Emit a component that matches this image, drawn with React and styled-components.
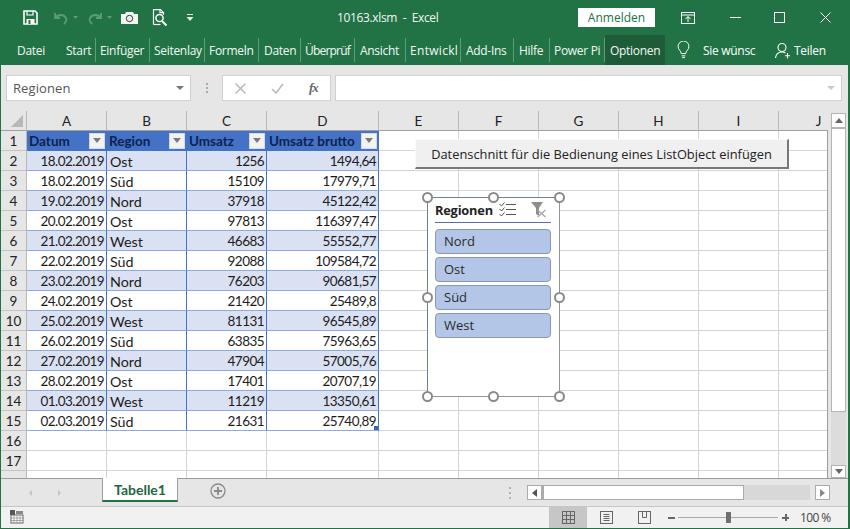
import React from "react";
import styled, { createGlobalStyle } from "styled-components";

const Global = createGlobalStyle`
  html, body { margin: 0; padding: 0; background: #fff; }
  * { box-sizing: border-box; }
`;
const ui = `"Open Sans", "Noto Sans", sans-serif`;
const cellFont = `Lato, "Liberation Sans", sans-serif`;
const GREEN = "#217346";

const Win = styled.div`
  width: 850px; height: 529px; display: flex; flex-direction: column; overflow: hidden;
  border-left: 1px solid ${GREEN}; border-right: 2px solid ${GREEN}; border-bottom: 1px solid ${GREEN};
  background: #e6e6e6; font-family: ${ui};
`;
const TitleBar = styled.div`
  height: 35px; flex: none; background: ${GREEN}; color: #fff; display: flex; align-items: center; position: relative;
`;
const QatIcon = styled.svg`
  flex: none; margin-left: ${p => p.$ml}px; display: block;
`;
const RibbonIcon = styled(QatIcon)`
  align-self: center;
`;
const Title = styled.div`
  width: 102px; margin-left: ${p => p.$ml}px; font-size: 12px; white-space: pre; color: #f2f7f4; letter-spacing: -0.35px;
`;
const SignIn = styled.div`
  margin-left: 139px; width: 77px; height: 19px; background: #fff; color: ${GREEN}; font-size: 12px;
  display: flex; align-items: center; justify-content: center; margin-top: -1px;
`;
const Ribbon = styled.div`
  height: 30px; flex: none; background: ${GREEN}; color: #fff; display: flex; align-items: stretch; font-size: 12px;
`;
const Tab = styled.div`
  width: ${p => p.$w}px; flex: none; overflow: hidden; white-space: nowrap; display: flex; align-items: center;
  padding-left: ${p => p.$pl ?? 4}px; letter-spacing: ${p => p.$ls ?? -0.3}px; color: #f4f8f6; position: relative;
  background: ${p => p.$active ? "#1e5c39" : "transparent"};
  ${p => p.$sep ? `&::after { content: ""; position: absolute; right: 0; top: 3px; bottom: 3px; width: 1px; background: #5f9c7c; }` : ""}
`;
const Help = styled.div`
  margin-left: ${p => p.$ml}px; width: ${p => p.$w}px; white-space: nowrap; display: flex; align-items: center; letter-spacing: -0.3px;
`;
const FormulaBar = styled.div`
  height: 46px; flex: none; background: #e6e6e6; display: flex; align-items: flex-start; padding: 10px 6px 0 5px;
`;
const NameBox = styled.div`
  width: 185px; height: 26px; background: #fff; border: 1px solid #d0d0d0; display: flex; align-items: center; justify-content: space-between;
  padding: 0 6px 0 6px; font-size: 13px; color: #555; letter-spacing: 0.1px;
`;
const Caret = styled.span`
  width: 0; height: 0; border-left: 4px solid transparent; border-right: 4px solid transparent; border-top: 4px solid ${p => p.$c || "#777"}; flex: none;
`;
const Grip = styled.div`
  width: 31px; height: 26px; flex: none; display: flex; flex-direction: column; align-items: center; justify-content: center; gap: 2px;
  i { width: 2px; height: 2px; background: #aaa; display: block; }
`;
const FxBox = styled.div`
  width: 109px; height: 26px; background: #fff; border: 1px solid #d0d0d0; display: flex; align-items: center; flex: none; padding-left: 12px; gap: 25px;
`;
const Fx = styled.span`
  font-family: "Liberation Serif", serif; font-style: italic; font-size: 13px; color: #666; font-weight: 700; letter-spacing: -1px;
`;
const Input = styled.div`
  margin-left: 4px; flex: 1; height: 26px; background: #fff; border: 1px solid #d0d0d0; display: flex; align-items: center; justify-content: flex-end; padding-right: 6px;
`;
const SheetArea = styled.div`
  height: 368px; flex: none; display: flex; background: #e6e6e6; border-bottom: 1px solid #9c9c9c;
`;
const GridWrap = styled.div`
  width: 827px; flex: none; height: 100%; overflow: hidden; position: relative;
  &::after { content: ""; position: absolute; right: 0; top: 19px; bottom: 0; width: 1px; background: #9c9c9c; }
`;
const Rows = styled.div`
  display: grid; grid-template-columns: 26px 80px 80px 80px 112px 80px 80px 80px 80px 80px 80px; grid-auto-rows: 20px;
`;
const Corner = styled.div`
  background: #e6e6e6; border-right: 1px solid #b9b9b9; border-bottom: 1px solid #a0a0a0; position: relative;
  &::after { content: ""; position: absolute; right: 3px; bottom: 3px; border-style: solid; border-width: 0 0 12px 12px; border-color: transparent transparent #b8b8b8 transparent; }
`;
const ColHead = styled.div`
  background: #e6e6e6; border-right: 1px solid #b9b9b9; border-bottom: 1px solid #a0a0a0; font-family: ${cellFont}; font-size: 13.5px; color: #222;
  display: flex; align-items: center; justify-content: center; padding-top: 1px;
`;
const RowHead = styled.div`
  background: #e6e6e6; border-right: 1px solid #b9b9b9; border-bottom: 1px solid #c4c4c4; font-family: ${cellFont}; font-size: 13.5px; color: #222;
  display: flex; align-items: center; justify-content: center; padding-top: 1px;
`;
const Cell = styled.div`
  background: #fff; border-right: 1px solid #d4d4d4; border-bottom: 1px solid #d4d4d4;
`;
const TCell = styled.div`
  background: ${p => p.$band ? "#d9e1f2" : "#fff"};
  border-right: 1px solid #4472c4; border-bottom: 1px solid #8ea9db;
  font-family: ${cellFont}; color: #1c1c1c; white-space: nowrap; overflow: hidden; position: relative;
  font-size: ${p => p.$num ? "13.5px" : "14.3px"}; letter-spacing: ${p => p.$num ? "-0.55px" : "0"};
  display: flex; align-items: center; padding: 1px 2px 0 3px;
  justify-content: ${p => p.$num ? "flex-end" : "flex-start"};
`;
const HCell = styled.div`
  background: #4472c4; border-right: 1px solid #4472c4; border-bottom: 1px solid #4472c4; font-family: ${cellFont}; font-weight: 700; font-size: 13.5px;
  color: #0e1f50; display: flex; align-items: center; justify-content: space-between; padding: 0 1px 0 2px; white-space: nowrap; overflow: hidden;
`;
const Filter = styled.span`
  width: 16px; height: 16px; background: #f3f3f3; border: 1px solid #d5d9e5; display: flex; align-items: center; justify-content: center; flex: none;
`;
const Resize = styled.span`
  position: absolute; right: 0; bottom: 0; width: 4px; height: 4px; background: #3d64ad;
`;
const MacroButton = styled.div`
  position: absolute; left: 414px; top: 28px; width: 374px; height: 30px; background: #f0f0f0;
  border-right: 2px solid #777; border-bottom: 2px solid #777; border-top: 1px solid #fafafa; border-left: 1px solid #fafafa;
  display: flex; align-items: center; justify-content: center; font-size: 12.85px; color: #222;
`;
const Slicer = styled.div`
  position: absolute; left: 426px; top: 86px; width: 133px; height: 200px; background: #fff; padding: 0 8px 0 7px;
  border: 1px solid #949494; border-left-color: #6d7fa3; border-top-color: #6d7fa3;
`;
const SlicerHead = styled.div`
  height: 25px; padding-bottom: 1px; border-bottom: 1px solid #5b6f9a; display: flex; align-items: center; font-family: ${ui}; font-weight: 700; font-size: 12.8px; color: #222; letter-spacing: -0.2px;
`;
const SlicerIcon = styled.svg`
  flex: none; margin-left: ${p => p.$ml}px; display: block;
`;
const SlicerList = styled.div`
  display: flex; flex-direction: column; gap: 3px; margin-top: 6px;
`;
const SlicerItem = styled.div`
  height: 25px; background: #b4c6e7; border: 1px solid #8898b8; border-radius: 4px; display: flex; align-items: center; padding: 0 0 1px 8px;
  font-family: ${ui}; font-size: 13px; color: #2a2a2a;
`;
const Handle = styled.span`
  position: absolute; width: 11px; height: 11px; border-radius: 50%; background: #fff; border: 2px solid #8a8a8a;
  left: ${p => p.$x}px; top: ${p => p.$y}px;
`;
const VScroll = styled.div`
  width: 20px; flex: none; display: flex; flex-direction: column; padding: 2px 2px 0 3px;
`;
const VBtn = styled.div`
  width: 15px; height: ${p => p.$h}px; background: #fff; border: 1px solid #b4b4b4; display: flex; align-items: center; justify-content: center; flex: none;
`;
const VThumb = styled.div`
  width: 15px; height: 284px; background: #fff; border: 1px solid #b4b4b4; flex: none;
`;
const VGap = styled.div`
  flex: 1; background: #dcdcdc; width: 15px;
`;
const SheetTabs = styled.div`
  height: 28px; flex: none; background: #e6e6e6; border-bottom: 1px solid #c6c6c6; display: flex; align-items: flex-start; position: relative;
`;
const Arrow = styled.span`
  margin-left: ${p => p.$ml}px; margin-top: 11px; width: 0; height: 0; border-top: 3px solid transparent; border-bottom: 3px solid transparent;
  ${p => p.$left ? "border-right: 3px solid #c4c4c4;" : "border-left: 3px solid #c4c4c4;"} flex: none;
`;
const SheetTab = styled.div`
  margin-left: 41px; margin-top: -1px; width: 76px; height: 24px; background: #fff; border-bottom: 2px solid #217346; border-left: 1px solid #9c9c9c; border-right: 1px solid #9c9c9c;
  color: #22663f; font-family: ${cellFont}; font-weight: 700; font-size: 14px; display: flex; align-items: center; justify-content: center; flex: none;
`;
const AddSheet = styled.svg`
  margin-left: 32px; margin-top: 4px; flex: none; display: block;
`;
const HDots = styled.div`
  margin-left: 283px; margin-top: 8px; flex: none; display: flex; flex-direction: column; gap: 3px;
  i { width: 2px; height: 2px; background: #b0b0b0; display: block; }
`;
const HScroll = styled.div`
  margin-left: 16px; margin-top: 6px; width: 303px; height: 15px; display: flex; flex: none;
`;
const HBtn = styled.div`
  width: 15px; height: 15px; background: #fff; border: 1px solid #ababab; display: flex; align-items: center; justify-content: center; flex: none;
`;
const HThumb = styled.div`
  width: 202px; height: 15px; background: #fff; border: 1px solid #ababab; border-left: 2px solid #ababab; flex: none;
`;
const HTrack = styled.div`
  width: 66px; height: 15px; background: #d8d8d8; margin-right: 5px; flex: none;
`;
const Status = styled.div`
  flex: 1; background: #f1f1f1; display: flex; align-items: stretch; position: relative; color: #444;
`;
const MacroIcon = styled.svg`
  margin-left: 9px; margin-top: 3px; display: block; flex: none;
`;
const ViewBtn = styled.div`
  width: 38px; flex: none; margin-left: ${p => p.$ml || 0}px; display: flex; align-items: center; justify-content: center; background: ${p => p.$on ? "#c6c6c6" : "transparent"};
`;
const Zoomer = styled.div`
  display: flex; align-items: center; margin-left: 5px; flex: none;
`;
const ZoomMark = styled.span`
  width: ${p => p.$w}px; height: 7px; position: relative; flex: none; display: block;
  &::before { content: ""; position: absolute; left: 0; right: 0; top: 2.5px; height: 2px; background: #666; }
  ${p => p.$plus ? `&::after { content: ""; position: absolute; left: 2.5px; width: 2px; top: 0; bottom: 0; background: #666; }` : ""}
`;
const ZoomTrack = styled.div`
  width: 100px; height: 1px; background: #a8a8a8; margin: 0 4px 0 3px; position: relative;
`;
const ZoomThumb = styled.span`
  position: absolute; left: 48px; top: -5px; width: 5px; height: 11px; background: #6f6f6f;
`;
const ZoomText = styled.div`
  margin-left: 11px; font-size: 12px; color: #444; align-self: center; letter-spacing: -0.6px;
`;

const data = [
  ["18.02.2019","Ost","1256","1494,64"],["18.02.2019","Süd","15109","17979,71"],["19.02.2019","Nord","37918","45122,42"],
  ["20.02.2019","Ost","97813","116397,47"],["21.02.2019","West","46683","55552,77"],["22.02.2019","Süd","92088","109584,72"],
  ["23.02.2019","Nord","76203","90681,57"],["24.02.2019","Ost","21420","25489,8"],["25.02.2019","West","81131","96545,89"],
  ["26.02.2019","Süd","63835","75963,65"],["27.02.2019","Nord","47904","57005,76"],["28.02.2019","Ost","17401","20707,19"],
  ["01.03.2019","West","11219","13350,61"],["02.03.2019","Süd","21631","25740,89"],
];
const cols = ["A","B","C","D","E","F","G","H","I","J"];
const heads = ["Datum","Region","Umsatz","Umsatz brutto"];
const tabs = [["Datei",65,16,false],["Start",30,0,true],["Einfüger",54,4,true],["Seitenlay",55,4,true],["Formeln",54,4,true],["Daten",42,5,true],["Überprüf",54,4,true,-0.8],["Ansicht",51,5,true],["Entwickl",55,4,true,0.3],["Add-Ins",53,5,true],["Hilfe",36,5,true],["Power Pi",55,4,true]];
const empties = Array.from({ length: 6 });

const Tri = ({ c = "#777", d = "down", s = 8 }) => {
  const pts = { down: "0,1 8,1 4,6", up: "0,6 8,6 4,1", left: "6,0 6,8 1,4", right: "1,0 1,8 6,4" }[d];
  return <svg width={s} height={s} viewBox="0 0 8 8"><polygon points={pts} fill={c} /></svg>;
};

export default function App() {
  return (
    <Win>
      <Global />
      <TitleBar>
        <QatIcon $ml={22} width="15" height="15" viewBox="0 0 15 15" fill="none" stroke="#fff" strokeWidth="1.6">
          <path d="M1 1h11l2 2v11H1z" /><path d="M4 1v4h6V1" strokeWidth="1.2" /><rect x="3.5" y="9" width="8" height="5" fill="#fff" stroke="none" /><rect x="5.5" y="10" width="2" height="4" fill={GREEN} stroke="none" />
        </QatIcon>
        <QatIcon $ml={15} width="28" height="14" viewBox="0 0 28 14" fill="none" stroke="#5d9a7b" strokeWidth="1.8">
          <path d="M2 2v5h5" /><path d="M2 7c3-4 9-4 11 0 1 2 0 4-2 6" /><path d="M20 5h5l-2.500 3z" fill="#5d9a7b" stroke="none" />
        </QatIcon>
        <QatIcon $ml={6} width="28" height="14" viewBox="0 0 28 14" fill="none" stroke="#5d9a7b" strokeWidth="1.8">
          <path d="M14 2v5H9" /><path d="M14 7c-3-4-9-4-11 0-1 2 0 4 2 6" /><path d="M20 5h5l-2.500 3z" fill="#5d9a7b" stroke="none" />
        </QatIcon>
        <QatIcon $ml={6} width="17" height="13" viewBox="0 0 17 13">
          <path d="M0 3h4l1-2h7l1 2h4v10H0z" fill="#f2f7f4" /><circle cx="8.500" cy="7.500" r="3.200" fill="#f2f7f4" stroke="#333" strokeWidth="1" /><circle cx="8.500" cy="7.500" r="1.500" fill="#d7e6de" />
        </QatIcon>
        <QatIcon $ml={14} width="17" height="17" viewBox="0 0 17 17" fill="none" stroke="#fff" strokeWidth="1.2">
          <path d="M1.500 15.500V.7h7l3 3v2" /><path d="M8 .7v3h3.500" /><circle cx="7.500" cy="9" r="3.600" strokeWidth="1.500" /><path d="M10 12l4.500 4.500" strokeWidth="2" /><path d="M1.500 15.500h7" />
        </QatIcon>
        <QatIcon $ml={17} width="8" height="8" viewBox="0 0 8 8" fill="#e4efe9">
          <rect x="1" y="0" width="6" height="1" /><polygon points="0.500,3 7.500,3 4,7" />
        </QatIcon>
        <Title $ml={143}>10163.xlsm  -  Excel</Title>
        <SignIn>Anmelden</SignIn>
        <QatIcon $ml={26} width="14" height="12" viewBox="0 0 14 12" fill="none" stroke="#fff">
          <rect x="0.500" y="0.500" width="13" height="11" /><path d="M.5 3h13M7 10V4.500M4.500 7 7 4.500 9.500 7" />
        </QatIcon>
        <QatIcon $ml={35} width="11" height="1" viewBox="0 0 11 1"><rect width="11" height="1" fill="#fff" /></QatIcon>
        <QatIcon $ml={33} width="11" height="11" viewBox="0 0 11 11" fill="none" stroke="#fff"><rect x="0.500" y="0.500" width="10" height="10" /></QatIcon>
        <QatIcon $ml={35} width="11" height="11" viewBox="0 0 11 11" fill="none" stroke="#fff"><path d="M.5.500l10 10M10.500.500l-10 10" /></QatIcon>
      </TitleBar>
      <Ribbon>
        {tabs.map(([t, w, pl, sep, ls]) => <Tab key={t} $w={w} $pl={pl} $sep={sep} $ls={ls}>{t}</Tab>)}
        <Tab $w={60} $pl={5} $active>Optionen</Tab>
        <RibbonIcon $ml={12} width="13" height="18" viewBox="0 0 14 20" fill="none" stroke="#fff" strokeWidth="1.100">
          <path d="M4.500 14c0-3-3.500-4-3.500-8a6 6 0 0 1 12 0c0 4-3.500 5-3.500 8z" /><path d="M5 16.500h4M5.500 18.500h3" />
        </RibbonIcon>
        <Help $ml={13} $w={50}>Sie wünsc</Help>
        <RibbonIcon $ml={22} width="17" height="17" viewBox="0 0 17 17" fill="none" stroke="#fff" strokeWidth="1.100">
          <circle cx="7" cy="5.500" r="4" /><path d="M.5 16c.5-4 3-6 6.500-6 1.500 0 2.500.3 3.500 1M12.500 11v5.500M10 13.800h5" />
        </RibbonIcon>
        <Help $ml={2} $w={40}>Teilen</Help>
      </Ribbon>
      <FormulaBar>
        <NameBox>Regionen<Caret /></NameBox>
        <Grip><i /><i /><i /></Grip>
        <FxBox>
          <svg width="11" height="11" viewBox="0 0 11 11" stroke="#b9b9b9" strokeWidth="1.500" fill="none"><path d="M.5.500l10 10M10.500.500l-10 10" /></svg>
          <svg width="13" height="11" viewBox="0 0 13 11" stroke="#b9b9b9" strokeWidth="1.500" fill="none"><path d="M1 6l4 4 7-9" /></svg>
          <Fx>fx</Fx>
        </FxBox>
        <Input><Caret $c="#c8c8c8" /></Input>
      </FormulaBar>
      <SheetArea>
        <GridWrap>
          <Rows>
            <Corner />
            {cols.map(c => <ColHead key={c}>{c}</ColHead>)}
            <RowHead>1</RowHead>
            {heads.map(h => <HCell key={h}>{h}<Filter><Tri c="#7a7a7a" /></Filter></HCell>)}
            {empties.map((_, i) => <Cell key={i} />)}
            {data.map((r, i) => (
              <React.Fragment key={i}>
                <RowHead>{i + 2}</RowHead>
                <TCell $band={i % 2 === 0} $num>{r[0]}</TCell>
                <TCell $band={i % 2 === 0}>{r[1]}</TCell>
                <TCell $band={i % 2 === 0} $num>{r[2]}</TCell>
                <TCell $band={i % 2 === 0} $num>{r[3]}{i === 13 && <Resize />}</TCell>
                {empties.map((_, j) => <Cell key={j} />)}
              </React.Fragment>
            ))}
            {[16, 17, 18].map(n => (
              <React.Fragment key={n}>
                <RowHead>{n < 18 ? n : ""}</RowHead>
                {cols.map(c => <Cell key={c} />)}
              </React.Fragment>
            ))}
          </Rows>
          <MacroButton>Datenschnitt für die Bedienung eines ListObject einfügen</MacroButton>
          <Slicer>
            <SlicerHead>
              Regionen
              <SlicerIcon $ml={6} width="17" height="15" viewBox="0 0 17 15" fill="none" stroke="#555" strokeWidth="1">
                <path d="M7 2.500h10M7 7.500h10M7 12.500h10" /><path d="M.5 2l2 2 3-3.500M.5 7l2 2 3-3.500M.5 12l2 2 3-3.500" />
              </SlicerIcon>
              <SlicerIcon $ml={15} width="16" height="16" viewBox="0 0 16 16">
                <path d="M0 0h12L8 6v8L5 12V6z" fill="#8e8e8e" /><path d="M6.500 8l8 7M14.500 8l-8 7" stroke="#a8a8a8" strokeWidth="1.300" />
              </SlicerIcon>
            </SlicerHead>
            <SlicerList>
              {["Nord","Ost","Süd","West"].map(s => <SlicerItem key={s}>{s}</SlicerItem>)}
            </SlicerList>
          </Slicer>
          {[[421,81],[487,81],[553,81],[421,181],[553,181],[421,280],[487,280],[553,280]].map(([x,y]) => <Handle key={x+"-"+y} $x={x} $y={y} />)}
        </GridWrap>
        <VScroll>
          <VBtn $h={15}><Tri c="#666" d="up" /></VBtn>
          <VThumb />
          <VGap />
          <VBtn $h={13}><Tri c="#666" /></VBtn>
        </VScroll>
      </SheetArea>
      <SheetTabs>
        <Arrow $ml={28} $left />
        <Arrow $ml={26} />
        <SheetTab>Tabelle1</SheetTab>
        <AddSheet width="16" height="16" viewBox="0 0 16 16" fill="none" stroke="#8a8a8a">
          <circle cx="8" cy="8" r="7" strokeWidth="1.300" /><path d="M8 4v8M4 8h8" strokeWidth="1.800" />
        </AddSheet>
        <HDots><i /><i /><i /></HDots>
        <HScroll>
          <HBtn><Tri c="#555" d="left" /></HBtn>
          <HThumb />
          <HTrack />
          <HBtn><Tri c="#888" d="right" /></HBtn>
        </HScroll>
      </SheetTabs>
      <Status>
        <MacroIcon width="14" height="14" viewBox="0 0 14 14">
          <rect x="0" y="0" width="5" height="5" fill="#555" /><rect x="1" y="5" width="12" height="8" fill="#fff" stroke="#666" />
          <path d="M1 8h12M1 10.500h12M4 5v8M7 5v8M10 5v8" stroke="#888" strokeWidth="0.700" /><rect x="6" y="1" width="7" height="3" fill="#888" />
        </MacroIcon>
        <ViewBtn $ml={525} $on>
          <svg width="13" height="13" viewBox="0 0 13 13" fill="none" stroke="#666"><rect x="0.500" y="0.500" width="12" height="12" /><path d="M.5 4.500h12M.5 8.500h12M4.500.5v12M8.500.5v12" /></svg>
        </ViewBtn>
        <ViewBtn>
          <svg width="13" height="13" viewBox="0 0 13 13" fill="none" stroke="#666"><rect x="0.500" y="0.500" width="12" height="12" /><path d="M3.500 3.500h6M3.500 5.500h6M3.500 7.500h6M3.500 9.500h6" /></svg>
        </ViewBtn>
        <ViewBtn>
          <svg width="13" height="13" viewBox="0 0 13 13" fill="none" stroke="#666"><rect x="0.500" y="0.500" width="12" height="12" /><path d="M4.500.5v6h4v-6" /></svg>
        </ViewBtn>
        <Zoomer>
          <ZoomMark $w={7} />
          <ZoomTrack><ZoomThumb /></ZoomTrack>
          <ZoomMark $w={7} $plus />
        </Zoomer>
        <ZoomText>100 %</ZoomText>
      </Status>
    </Win>
  );
}
